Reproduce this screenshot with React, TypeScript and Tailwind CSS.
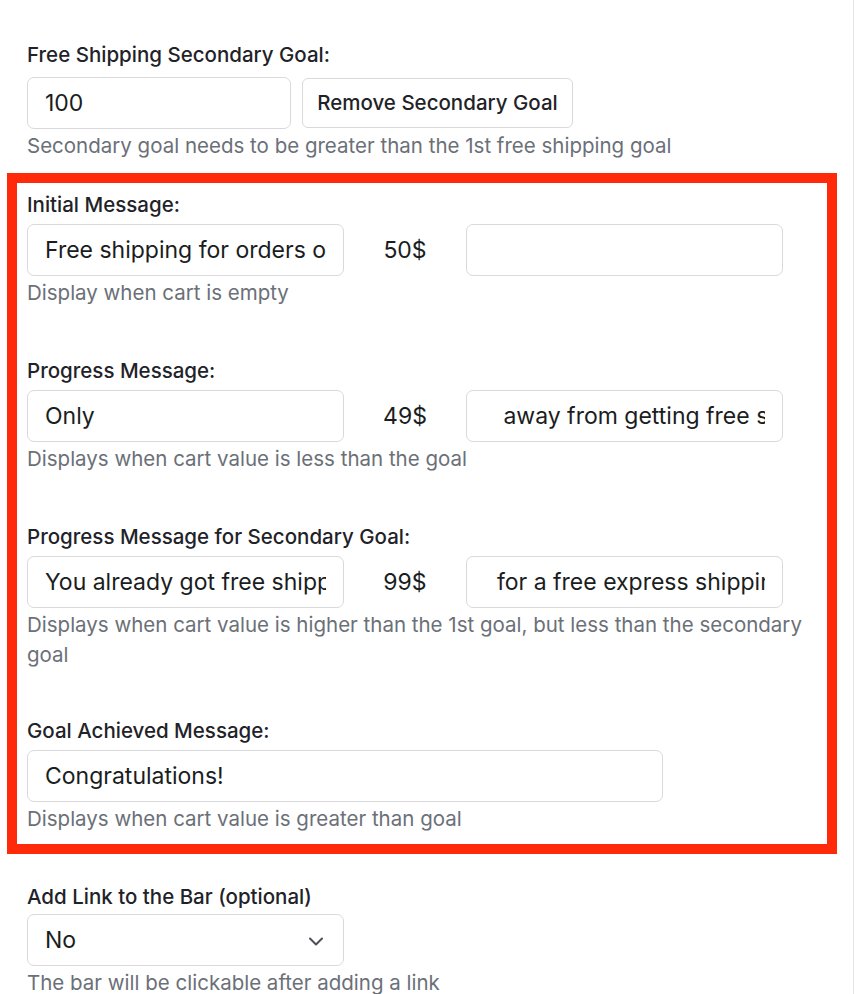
import React from "react";

function Label({ children, mb = "mb-[5px]" }: { children: React.ReactNode; mb?: string }) {
  return (
    <div className={`text-[20.5px] leading-[28px] font-medium text-[#1f2329] ${mb}`}>
      {children}
    </div>
  );
}

function Help({ children }: { children: React.ReactNode }) {
  return (
    <div className="mt-[2px] text-[20.5px] leading-[30px] text-[#6b7078]">{children}</div>
  );
}

function TextInput({ value, w }: { value: string; w: string }) {
  return (
    <input
      readOnly
      value={value}
      className={`${w} h-[52px] rounded-[7px] border border-[#d9d9dc] bg-white px-[17px] text-[23px] text-[#1a1d21] outline-none font-[Inter,sans-serif]`}
    />
  );
}

function MessageRow({ a, amount, b }: { a: string; amount: string; b: string }) {
  return (
    <div className="flex items-center">
      <TextInput value={a} w="w-[317px]" />
      <div className="w-[122px] text-center text-[23px] text-[#1a1d21]">{amount}</div>
      <TextInput value={b} w="w-[317px]" />
    </div>
  );
}

export default function App() {
  return (
    <div className="w-[856px] min-h-[994px] bg-white font-[Inter,sans-serif]">
      <div className="w-[854px] min-h-[994px] border-r border-[#e4e4e6] pt-[41px]">
        <div className="px-[27px]">
          <div className="text-[20.5px] leading-[28px] font-medium text-[#1f2329] mb-[8px]">
            Free Shipping Secondary Goal:
          </div>
          <div className="flex items-center gap-[11px]">
            <TextInput value="100" w="w-[264px]" />
            <button className="h-[50px] w-[271px] rounded-[6px] border border-[#d9d9dc] bg-white text-[20.5px] font-medium text-[#1f2329]">
              Remove Secondary Goal
            </button>
          </div>
          <Help>Secondary goal needs to be greater than the 1st free shipping goal</Help>
        </div>

        <div className="ml-[7px] mt-[12px] w-[830px] border-[10px] border-[#fe2a0a] pl-[10px] pr-[10px] pt-[8px] pb-[10px]">
          <Label>Initial Message:</Label>
          <MessageRow a="Free shipping for orders over" amount="50$" b="" />
          <Help>Display when cart is empty</Help>

          <div className="mt-[49px]">
            <Label>Progress Message:</Label>
            <MessageRow a="Only" amount="49$" b="   away from getting free shipping" />
            <Help>Displays when cart value is less than the goal</Help>
          </div>

          <div className="mt-[49px]">
            <Label>Progress Message for Secondary Goal:</Label>
            <MessageRow
              a="You already got free shipping"
              amount="99$"
              b="  for a free express shipping"
            />
            <Help>
              Displays when cart value is higher than the 1st goal, but less than the secondary goal
            </Help>
          </div>

          <div className="mt-[47px]">
            <Label>Goal Achieved Message:</Label>
            <TextInput value="Congratulations!" w="w-[636px]" />
            <Help>Displays when cart value is greater than goal</Help>
          </div>
        </div>

        <div className="px-[27px] mt-[29px]">
          <Label mb="mb-[3px]">Add Link to the Bar (optional)</Label>
          <div className="relative flex h-[52px] w-[317px] items-center rounded-[7px] border border-[#d9d9dc] bg-white px-[17px] text-[23px] text-[#1a1d21]">
            <span>No</span>
            <svg
              className="absolute right-[19px] top-[18px]"
              width="16"
              height="16"
              viewBox="0 0 16 16"
              fill="none"
              stroke="#4b4f56"
              strokeWidth="2"
              strokeLinecap="round"
              strokeLinejoin="round"
            >
              <path d="M2 5.5l6 6 6-6" />
            </svg>
          </div>
          <Help>The bar will be clickable after adding a link</Help>
        </div>
      </div>
    </div>
  );
}
